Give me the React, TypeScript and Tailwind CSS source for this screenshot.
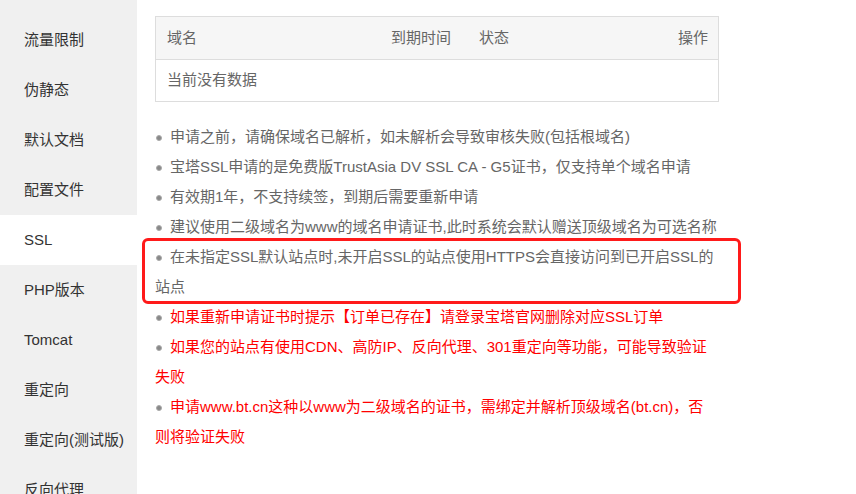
import React from 'react';

const menu = ['流量限制', '伪静态', '默认文档', '配置文件', 'SSL', 'PHP版本', 'Tomcat', '重定向', '重定向(测试版)', '反向代理'];

const tips: { text: string; red?: boolean }[] = [
  { text: '申请之前，请确保域名已解析，如未解析会导致审核失败(包括根域名)' },
  { text: '宝塔SSL申请的是免费版TrustAsia DV SSL CA - G5证书，仅支持单个域名申请' },
  { text: '有效期1年，不支持续签，到期后需要重新申请' },
  { text: '建议使用二级域名为www的域名申请证书,此时系统会默认赠送顶级域名为可选名称' },
  { text: '在未指定SSL默认站点时,未开启SSL的站点使用HTTPS会直接访问到已开启SSL的站点' },
  { text: '如果重新申请证书时提示【订单已存在】请登录宝塔官网删除对应SSL订单', red: true },
  { text: '如果您的站点有使用CDN、高防IP、反向代理、301重定向等功能，可能导致验证失败', red: true },
  { text: '申请www.bt.cn这种以www为二级域名的证书，需绑定并解析顶级域名(bt.cn)，否则将验证失败', red: true },
];

export default function App() {
  return (
    <div className="flex h-[494px] w-[856px] overflow-hidden bg-white text-[15px] font-['Liberation_Sans','Noto_Sans_CJK_SC',sans-serif]">
      {/* Sidebar */}
      <div className="w-[137px] shrink-0 bg-[#f0f0f0] pt-[15px]">
        {menu.map((m) => (
          <div
            key={m}
            className={`flex h-[50px] items-center pl-6 text-[#333] ${m === 'SSL' ? 'bg-white' : ''}`}
          >
            {m}
          </div>
        ))}
      </div>

      {/* Content */}
      <div className="relative flex-1 pl-[18px] pt-[16px]">
        <div className="w-[564px] border border-[#ddd] text-[#666]">
          <div className="flex h-[43px] items-center border-b border-[#ddd] bg-[#f6f6f6] pl-[11px] pr-[10px] pt-[1px]">
            <span className="w-[224px]">域名</span>
            <span className="w-[88px]">到期时间</span>
            <span className="flex-1">状态</span>
            <span>操作</span>
          </div>
          <div className="flex h-[41px] items-center pl-[11px]">当前没有数据</div>
        </div>

        <ul className="mt-[20px] w-[563px] leading-[30px]">
          {tips.map((t, i) => (
            <li key={i} className={t.red ? 'text-[#ff0000]' : 'text-[#666]'}>
              <span className="mr-[8px] ml-[1px] inline-block h-[6px] w-[6px] rounded-full border border-[#aaa] bg-[#888] align-middle" />
              {t.text}
            </li>
          ))}
        </ul>

        {/* annotation box */}
        <div className="absolute left-[5px] top-[238px] h-[66px] w-[599px] rounded-[6px] border-[3px] border-[#ff1a1a]" />
      </div>
    </div>
  );
}
